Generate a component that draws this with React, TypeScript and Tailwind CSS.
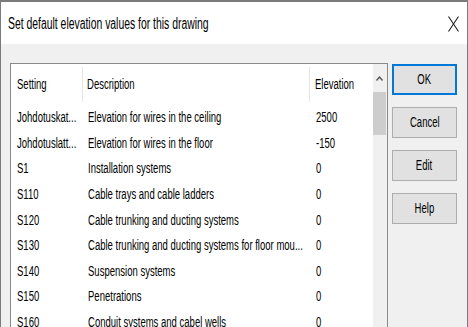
import React from "react";

const rows: [string, string, string][] = [
  ["Johdotuskat...", "Elevation for wires in the ceiling", "2500"],
  ["Johdotuslatt...", "Elevation for wires in the floor", "-150"],
  ["S1", "Installation systems", "0"],
  ["S110", "Cable trays and cable ladders", "0"],
  ["S120", "Cable trunking and ducting systems", "0"],
  ["S130", "Cable trunking and ducting systems for floor mou...", "0"],
  ["S140", "Suspension systems", "0"],
  ["S150", "Penetrations", "0"],
  ["S160", "Conduit systems and cabel wells", "0"],
];

function T({ children, center }: { children: React.ReactNode; center?: boolean }) {
  return (
    <span
      className={
        "inline-block whitespace-nowrap scale-x-[0.68] " +
        (center ? "origin-center" : "origin-left")
      }
    >
      {children}
    </span>
  );
}

function Btn({ label, active }: { label: string; active?: boolean }) {
  return (
    <div
      className={
        "h-[31px] w-[65px] flex items-center justify-center bg-[#e1e1e1] text-[14px] text-black " +
        (active ? "border-2 border-[#0078d7]" : "border border-[#adadad]")
      }
    >
      <T center>{label}</T>
    </div>
  );
}

export default function App() {
  return (
    <div className="w-[468px] h-[327px] overflow-hidden bg-[#f0f0f0] border-t-2 border-l border-r border-[#7a7a7a] font-['Liberation_Sans',Arial,sans-serif] text-black">
      <div className="h-[42px] bg-white flex items-center justify-between pl-[7px] pr-[7px]">
        <span className="text-[16px] inline-block whitespace-nowrap origin-left scale-x-[0.65] leading-none mt-[2px]">
          Set default elevation values for this drawing
        </span>
        <svg width="11" height="16" viewBox="0 0 11 16" className="mr-[1px] mt-[1px]">
          <path d="M0.5 0.5 L10.5 15.5 M10.5 0.5 L0.5 15.5" stroke="#222" strokeWidth="1.1" fill="none" />
        </svg>
      </div>
      <div className="flex pl-[9px] pt-[19px]">
        <div className="w-[378px] h-[300px] border border-[#8a8a8a] bg-white flex">
          <div className="flex-1 text-[14px]">
            <div className="h-[41px] flex">
              <div className="w-[72px] flex items-center pl-[6px] border-r border-[#e5e5e5] my-[3px]">
                <T>Setting</T>
              </div>
              <div className="w-[227px] flex items-center pl-[4px] border-r border-[#e5e5e5] my-[3px]">
                <T>Description</T>
              </div>
              <div className="flex-1 flex items-center pl-[5px] my-[3px]">
                <T>Elevation</T>
              </div>
            </div>
            {rows.map((r, i) => (
              <div key={i} className="h-[25.6px] flex items-center">
                <div className="w-[72px] pl-[6px]">
                  <T>{r[0]}</T>
                </div>
                <div className="w-[227px] pl-[5px]">
                  <T>{r[1]}</T>
                </div>
                <div className="flex-1 pl-[6px]">
                  <T>{r[2]}</T>
                </div>
              </div>
            ))}
          </div>
          <div className="w-[16px] bg-[#f0f0f0] flex flex-col items-center">
            <div className="h-[28px] w-full flex items-center justify-center">
              <svg width="7" height="5" viewBox="0 0 7 5">
                <path d="M0.5 4.5 L3.5 1 L6.5 4.5" stroke="#505050" strokeWidth="1.3" fill="none" />
              </svg>
            </div>
            <div className="w-[13px] h-[43px] bg-[#cdcdcd]" />
          </div>
        </div>
        <div className="ml-[4px] flex flex-col gap-[12px] pt-[1px]">
          <Btn label="OK" active />
          <Btn label="Cancel" />
          <Btn label="Edit" />
          <Btn label="Help" />
        </div>
      </div>
    </div>
  );
}
